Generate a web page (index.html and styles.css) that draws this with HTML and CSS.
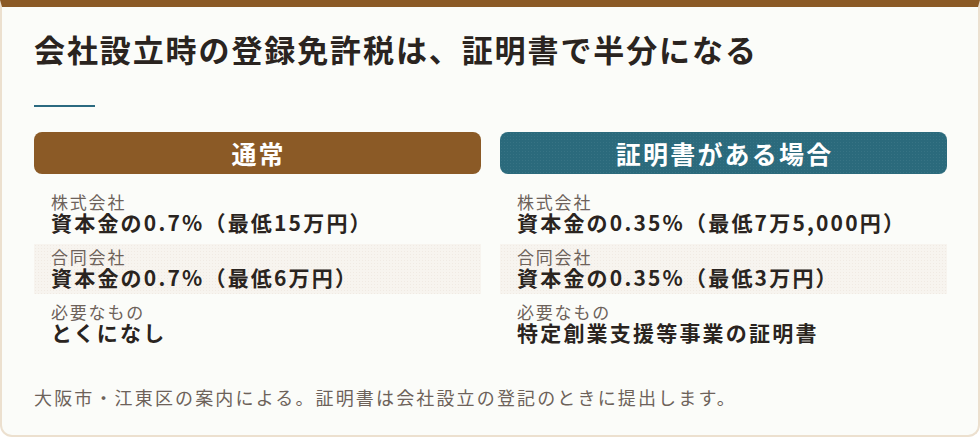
FILE: index.html
```html
<!DOCTYPE html>
<html lang="ja">
<head>
<meta charset="utf-8">
<title>登録免許税</title>
<link rel="stylesheet" href="styles.css">
</head>
<body>
<div class="card">
  <h2 class="title">会社設立時の登録免許税は、証明書で半分になる</h2>
  <div class="rule"></div>
  <div class="cols">
    <section class="col col-normal">
      <div class="head">通常</div>
      <ul class="rows">
        <li class="row"><span class="label">株式会社</span><span class="value">資本金の0.7%（最低15万円）</span></li>
        <li class="row"><span class="label">合同会社</span><span class="value">資本金の0.7%（最低6万円）</span></li>
        <li class="row"><span class="label">必要なもの</span><span class="value">とくになし</span></li>
      </ul>
    </section>
    <section class="col col-cert">
      <div class="head">証明書がある場合</div>
      <ul class="rows">
        <li class="row"><span class="label">株式会社</span><span class="value">資本金の0.35%（最低7万5,000円）</span></li>
        <li class="row"><span class="label">合同会社</span><span class="value">資本金の0.35%（最低3万円）</span></li>
        <li class="row"><span class="label">必要なもの</span><span class="value">特定創業支援等事業の証明書</span></li>
      </ul>
    </section>
  </div>
  <p class="note">大阪市・江東区の案内による。証明書は会社設立の登記のときに提出します。</p>
</div>
</body>
</html>
```

FILE: styles.css
```css
* { box-sizing: border-box; }
html, body { margin: 0; padding: 0; }
body {
  background: #ffffff;
  font-family: "Noto Sans CJK JP", "Noto Sans", sans-serif;
  color: #2b2420;
}
.card {
  width: 980px;
  height: 437px;
  background: #fbfcf9;
  border-top: 7px solid #8b5a26;
  border-left: 2px solid #ece0cf;
  border-right: 2px solid #ece0cf;
  border-bottom: 2px solid #ece0cf;
  border-radius: 0 0 12px 12px;
  padding: 0 31px 0 32px;
}
.title {
  margin: 0;
  padding-top: 22px;
  font-size: 31px;
  line-height: 40px;
  font-weight: 700;
  letter-spacing: 1.9px;
  color: #2a2420;
}
.rule {
  width: 61px;
  height: 2px;
  background: #2b6a80;
  margin-top: 36px;
}
.cols {
  display: grid;
  grid-template-columns: 1fr 1fr;
  column-gap: 19px;
  margin-top: 25px;
}
.head {
  height: 42px;
  border-radius: 8px;
  color: #ffffff;
  font-size: 25px;
  font-weight: 700;
  line-height: 42px;
  text-align: center;
  letter-spacing: 2.2px;
  text-indent: 2.2px;
}
.col-normal .head { background: #8b5a26; }
.col-cert .head {
  background-color: #2b6a7c;
  background-image: radial-gradient(circle, rgba(255,255,255,0.06) 0.6px, transparent 0.8px);
  background-size: 3px 3px;
}
.rows {
  list-style: none;
  margin: 15px 0 0;
  padding: 0;
  display: flex;
  flex-direction: column;
  gap: 5px;
}
.row {
  display: flex;
  flex-direction: column;
  padding: 4px 16px 0 17px;
  height: 50px;
}
.row:nth-child(2) {
  background-color: #f7f4ef;
  background-image: radial-gradient(circle, rgba(190,170,140,0.12) 0.6px, transparent 0.8px);
  background-size: 3px 3px;
}
.label {
  font-size: 17px;
  line-height: 17px;
  color: #6d625a;
  letter-spacing: 1.8px;
}
.value {
  font-size: 21px;
  line-height: 24px;
  font-weight: 700;
  letter-spacing: 2.2px;
  color: #2a2420;
}
.note {
  margin: 36px 0 0;
  font-size: 18px;
  line-height: 24px;
  letter-spacing: 2.15px;
  color: #6d625a;
}
```
